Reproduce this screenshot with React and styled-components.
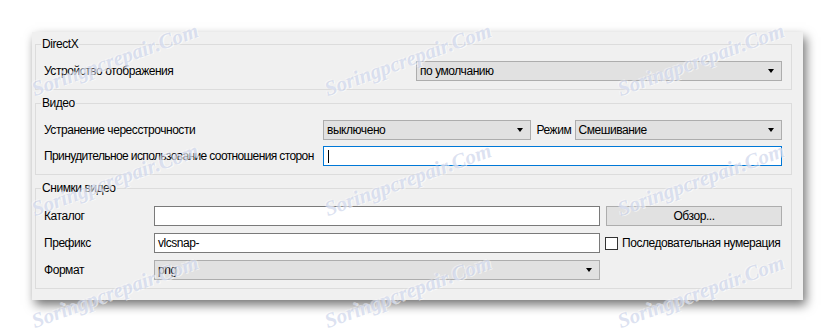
import React from 'react';
import styled, { createGlobalStyle } from 'styled-components';

const GlobalStyle = createGlobalStyle`
    body {
        margin: 0;
        background: #ffffff;
        font-family: 'Liberation Sans', Arial, sans-serif;
        font-size: 12px;
        letter-spacing: -0.45px;
        color: #000000;
    }
`;

const Page = styled.div`
    position: relative;
    width: 835px;
    height: 333px;
    overflow: hidden;
    padding: 32px 0 0 32px;
    box-sizing: border-box;
`;

const Panel = styled.div`
    width: 771px;
    height: 268px;
    box-sizing: border-box;
    background: #f0f0f0;
    box-shadow: 3px 5px 10px rgba(0, 0, 0, 0.55);
    padding: 4px 11px 0 3px;
    display: flex;
    flex-direction: column;
    gap: 5px;
`;

const Group = styled.fieldset`
    margin: 0;
    border: 1px solid #dcdcdc;
    padding: ${(p) => p.$pad || '9px 9px 8px 8px'};
    min-width: 0;
`;

const Title = styled.legend`
    padding: 0 1px;
    margin-left: -3px;
    line-height: 16px;
    height: 16px;
`;

const Rows = styled.div`
    display: grid;
    grid-template-columns: ${(p) => p.$cols};
    grid-auto-rows: 20px;
    row-gap: ${(p) => p.$gap || '6px'};
    column-gap: ${(p) => p.$colGap || '0px'};
    align-items: center;
`;

const Label = styled.span`
    white-space: nowrap;
    padding-left: ${(p) => p.$indent || '0px'};
    letter-spacing: ${(p) => (p.$tight ? '-0.62px' : 'inherit')};
`;

const Combo = styled.div`
    height: 20px;
    box-sizing: border-box;
    border: 1px solid #adadad;
    background: #e1e1e1;
    display: flex;
    align-items: center;
    justify-content: space-between;
    padding: 0 7px 0 3px;
    &::after {
        content: '';
        border-left: 3.5px solid transparent;
        border-right: 3.5px solid transparent;
        border-top: 4px solid #000;
    }
`;

const Input = styled.div`
    height: 20px;
    box-sizing: border-box;
    border: 1px solid ${(p) => (p.$focused ? '#0078d7' : '#7a7a7a')};
    background: #ffffff;
    display: flex;
    align-items: center;
    padding: 0 3px;
    grid-column: ${(p) => p.$span || 'auto'};
`;

const Caret = styled.span`
    width: 1px;
    height: 13px;
    margin-left: 1px;
    background: #000;
`;

const Button = styled.div`
    height: 20px;
    box-sizing: border-box;
    border: 1px solid #adadad;
    background: #e1e1e1;
    display: flex;
    align-items: center;
    justify-content: center;
`;

const Check = styled.label`
    display: flex;
    align-items: center;
    gap: 4px;
    margin-left: -1px;
    white-space: nowrap;
`;

const Box = styled.span`
    flex-shrink: 0;
    width: 13px;
    height: 13px;
    box-sizing: border-box;
    border: 1px solid #333333;
    background: #ffffff;
`;

const Watermark = styled.span`
    position: absolute;
    transform: translate(-50%, -50%) rotate(-20deg);
    font-family: 'Liberation Serif', serif;
    font-style: italic;
    font-weight: bold;
    font-size: 21px;
    letter-spacing: 0;
    color: rgba(192, 202, 230, 0.55);
    text-shadow: 1px 1px 0 rgba(255, 255, 255, 0.6), -1px -1px 0 rgba(255, 255, 255, 0.4);
    white-space: nowrap;
    pointer-events: none;
`;

const marks = [];
[60, 180, 292].forEach((y) => [115, 408, 701].forEach((x) => marks.push({ x, y })));

export default function App() {
    return (
        <Page>
            <GlobalStyle />
            <Panel>
                <Group>
                    <Title>DirectX</Title>
                    <Rows $cols="372px 1fr">
                        <Label>Устройство отображения</Label>
                        <Combo>по умолчанию</Combo>
                    </Rows>
                </Group>
                <Group>
                    <Title>Видео</Title>
                    <Rows $cols="279px 1fr 44px 1fr">
                        <Label>Устранение чересстрочности</Label>
                        <Combo>выключено</Combo>
                        <Label $indent="6px">Режим</Label>
                        <Combo>Смешивание</Combo>
                        <Label $tight>Принудительное использование соотношения сторон</Label>
                        <Input $focused $span="2 / 5">
                            <Caret />
                        </Input>
                    </Rows>
                </Group>
                <Group $pad="10px 9px 8px 8px">
                    <Title>Снимки видео</Title>
                    <Rows $cols="104px 446px minmax(0, 1fr)" $gap="7px" $colGap="6px">
                        <Label>Каталог</Label>
                        <Input />
                        <Button>Обзор...</Button>
                        <Label>Префикс</Label>
                        <Input>vlcsnap-</Input>
                        <Check>
                            <Box />
                            Последовательная нумерация
                        </Check>
                        <Label>Формат</Label>
                        <Combo>png</Combo>
                    </Rows>
                </Group>
            </Panel>
            {marks.map((m, i) => (
                <Watermark key={i} style={{ left: m.x, top: m.y }}>
                    Soringpcrepair.Com
                </Watermark>
            ))}
        </Page>
    );
}
